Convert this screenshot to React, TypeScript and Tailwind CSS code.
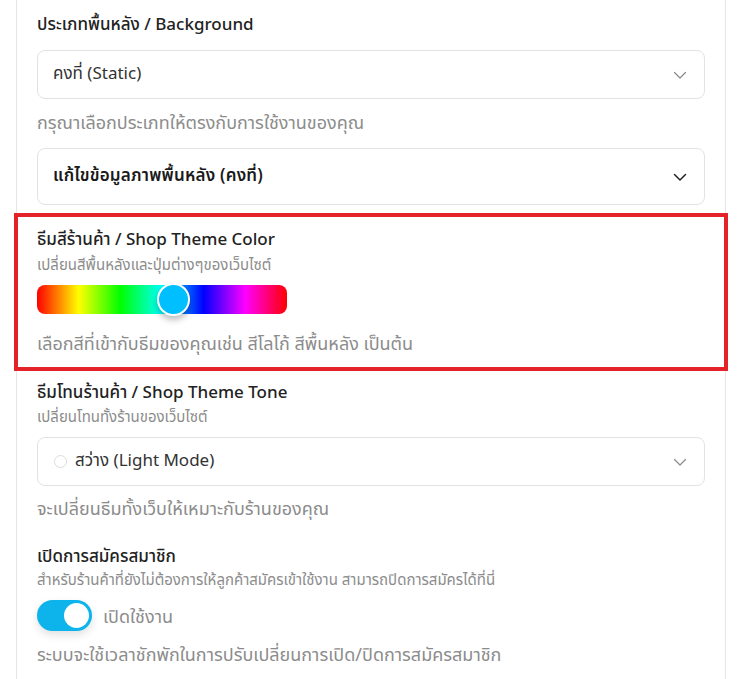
import React from "react";

const Chevron = ({ dark }: { dark?: boolean }) => (
  <svg width="16" height="16" viewBox="0 0 16 16" fill="none" className="shrink-0">
    <path d="M2.5 5.5 L8 11 L13.5 5.5" stroke={dark ? "#222" : "#8a8a8a"} strokeWidth={dark ? 1.5 : 1.2} strokeLinecap="round" strokeLinejoin="round" />
  </svg>
);

export default function App() {
  return (
    <div
      className="min-h-[679px] bg-white pl-[16px] pr-[17px] text-[#222]"
      style={{ fontFamily: '"Noto Sans Thai", "Noto Sans", "Liberation Sans", sans-serif' }}
    >
      <div className="flex min-h-[679px] flex-col border-x border-[#e6e6e6] px-[20px] pt-[13px]">
        {/* Background type */}
        <div className="text-[17px] font-medium leading-[24px]">ประเภทพื้นหลัง / Background</div>
        <div className="mt-[13px] flex h-[49px] items-center justify-between rounded-[8px] border border-[#e3e3e3] pl-[15px] pr-[16px] text-[17px] text-[#333]">
          <span>คงที่ (Static)</span>
          <Chevron />
        </div>
        <div className="mt-[13px] text-[18px] leading-[24px] text-[#8c8c8c]">กรุณาเลือกประเภทให้ตรงกับการใช้งานของคุณ</div>
        <div className="mt-[12px] flex h-[57px] items-center justify-between rounded-[8px] border border-[#e3e3e3] pl-[15px] pr-[16px]">
          <span className="text-[17px] font-semibold tracking-[0.2px] text-[#1a1a1a]">แก้ไขข้อมูลภาพพื้นหลัง (คงที่)</span>
          <Chevron dark />
        </div>

        {/* Theme color (highlighted) */}
        <div className="-mx-[23px] mt-[8px] flex h-[158px] flex-col border-4 border-[#e4222a] px-[19px] pt-[11px]">
          <div className="text-[17px] font-medium leading-[24px]">ธีมสีร้านค้า / Shop Theme Color</div>
          <div className="mt-[4px] text-[15px] leading-[20px] text-[#8c8c8c]">เปลี่ยนสีพื้นหลังและปุ่มต่างๆของเว็บไซต์</div>
          <div className="relative mt-[9px] h-[29px] w-[250px] rounded-[8px] bg-[linear-gradient(to_right,#ff0000_0%,#ffff00_16.67%,#00ff00_33.33%,#00ffff_50%,#0000ff_66.67%,#ff00ff_83.33%,#ff0000_100%)]">
            <div className="absolute left-[120px] top-[-2px] h-[33px] w-[33px] rounded-full border-2 border-white bg-[#00bfff] shadow-[0_4px_6px_rgba(0,0,0,0.25)]" />
          </div>
          <div className="mt-[19px] text-[18px] leading-[24px] text-[#8c8c8c]">เลือกสีที่เข้ากับธีมของคุณเช่น สีโลโก้ สีพื้นหลัง เป็นต้น</div>
        </div>

        {/* Theme tone */}
        <div className="mt-[10px] text-[17px] font-medium leading-[24px]">ธีมโทนร้านค้า / Shop Theme Tone</div>
        <div className="mt-[3px] text-[15px] leading-[20px] text-[#8c8c8c]">เปลี่ยนโทนทั้งร้านของเว็บไซต์</div>
        <div className="mt-[9px] flex h-[49px] items-center justify-between rounded-[8px] border border-[#e3e3e3] pl-[16px] pr-[16px] text-[17px] text-[#333]">
          <span className="flex items-center gap-[8px]">
            <span className="h-[13px] w-[13px] rounded-full border border-[#dcdcdc] bg-white" />
            <span>สว่าง (Light Mode)</span>
          </span>
          <Chevron />
        </div>
        <div className="mt-[12px] text-[18px] leading-[24px] text-[#8c8c8c]">จะเปลี่ยนธีมทั้งเว็บให้เหมาะกับร้านของคุณ</div>

        {/* Member signup */}
        <div className="mt-[23px] text-[17px] font-medium leading-[24px]">เปิดการสมัครสมาชิก</div>
        <div className="mt-[2px] text-[15px] leading-[20px] text-[#8c8c8c]">สำหรับร้านค้าที่ยังไม่ต้องการให้ลูกค้าสมัครเข้าใช้งาน สามารถปิดการสมัครได้ที่นี่</div>
        <div className="mt-[9px] flex items-center gap-[11px]">
          <div className="flex h-[31px] w-[55px] items-center justify-end rounded-full bg-[#0db4ec] pr-[3px] shadow-[0_4px_8px_rgba(0,0,0,0.12)]">
            <div className="h-[25px] w-[25px] rounded-full bg-white" />
          </div>
          <span className="pt-[4px] text-[18px] text-[#8c8c8c]">เปิดใช้งาน</span>
        </div>
        <div className="mt-[13px] text-[18px] leading-[24px] text-[#8c8c8c]">ระบบจะใช้เวลาชักพักในการปรับเปลี่ยนการเปิด/ปิดการสมัครสมาชิก</div>
      </div>
    </div>
  );
}
